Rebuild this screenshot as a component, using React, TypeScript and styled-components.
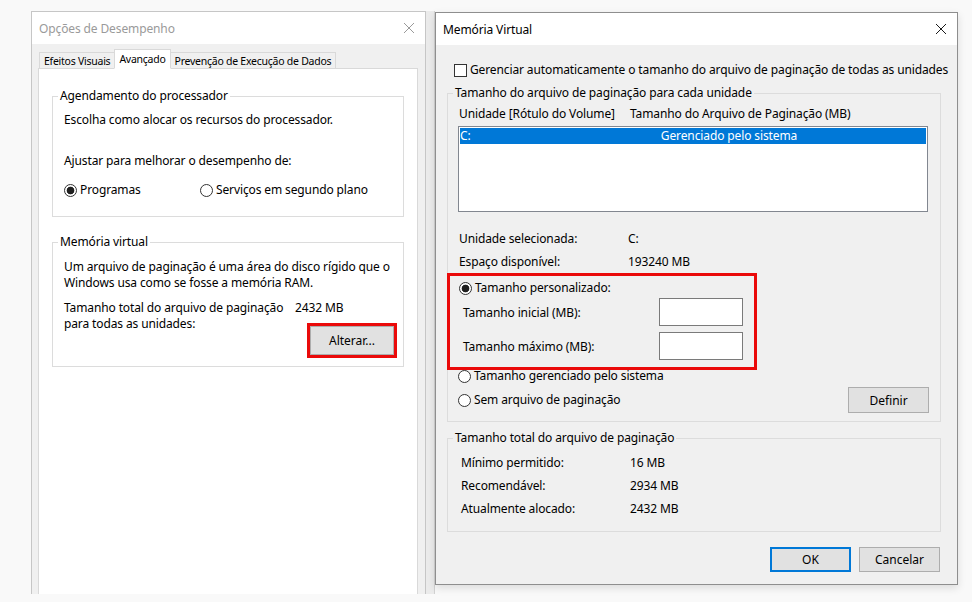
import React from 'react'
import styled, { createGlobalStyle } from 'styled-components'

const GlobalStyle = createGlobalStyle`
  * { box-sizing: border-box; }
  html, body { margin: 0; padding: 0; background: #f9f9f9; }
  body {
    font-family: "Noto Sans", "Open Sans", sans-serif;
    font-size: 12px;
    letter-spacing: -0.12px;
    color: #000;
  }
`

const CloseIcon = ({ color }: { color: string }) => (
  <svg width="12" height="12" viewBox="0 0 12 12">
    <path d="M1 1 L11 11 M11 1 L1 11" stroke={color} strokeWidth="1" fill="none" />
  </svg>
)

const Page = () => (
  <Screen>
    <PerfWindow>
      <TitleBar>
        <Title $inactive>Opções de Desempenho</Title>
        <CloseIcon color="#9a9a9a" />
      </TitleBar>
      <PerfBody>
        <TabStrip>
          <Tab>Efeitos Visuais</Tab>
          <Tab $active>Avançado</Tab>
          <Tab>Prevenção de Execução de Dados</Tab>
        </TabStrip>
        <TabPanel>
          <Group $pad={11} $padRight={11} $padBottom={18}>
            <Legend $pad={11}>Agendamento do processador</Legend>
            <Line $top={8}>Escolha como alocar os recursos do processador.</Line>
            <Line $top={25}>Ajustar para melhorar o desempenho de:</Line>
            <RadioPair>
              <Radio checked label="Programas" />
              <Radio label="Serviços em segundo plano" />
            </RadioPair>
          </Group>

          <Group $pad={11} $padRight={6} $padBottom={8} $top={17}>
            <Legend $pad={11}>Memória virtual</Legend>
            <Line $top={9}>Um arquivo de paginação é uma área do disco rígido que o</Line>
            <Line>Windows usa como se fosse a memória RAM.</Line>
            <TotalRow>
              <span>Tamanho total do arquivo de paginação</span>
              <span>2432 MB</span>
            </TotalRow>
            <ChangeRow>
              <span>para todas as unidades:</span>
              <Mark>
                <Button $w={84} $h={29}>Alterar...</Button>
              </Mark>
            </ChangeRow>
          </Group>
        </TabPanel>
      </PerfBody>
    </PerfWindow>

    <BehindStrip />

    <VmWindow>
      <TitleBar>
        <Title>Memória Virtual</Title>
        <CloseIcon color="#1a1a1a" />
      </TitleBar>
      <VmBody>
        <CheckRow>
          <CheckBox />
          <span>Gerenciar automaticamente o tamanho do arquivo de paginação de todas as unidades</span>
        </CheckRow>

        <Group $pad={10} $padRight={12} $padBottom={8} $top={7}>
          <Legend $pad={10}>Tamanho do arquivo de paginação para cada unidade</Legend>
          <ListHeader>
            <span>Unidade [Rótulo do Volume]</span>
            <span>Tamanho do Arquivo de Paginação (MB)</span>
          </ListHeader>
          <ListBox>
            <ListItem $selected>
              <span>C:</span>
              <ItemSize>Gerenciado pelo sistema</ItemSize>
            </ListItem>
          </ListBox>
          <InfoGrid $top={19} $indent={1}>
            <span>Unidade selecionada:</span>
            <span>C:</span>
            <span>Espaço disponível:</span>
            <span>193240 MB</span>
          </InfoGrid>

          <Highlight>
            <Radio checked label="Tamanho personalizado:" />
            <SizeRow $top={2}>
              <span>Tamanho inicial (MB):</span>
              <SizeInput />
            </SizeRow>
            <SizeRow $top={6}>
              <span>Tamanho máximo (MB):</span>
              <SizeInput />
            </SizeRow>
          </Highlight>

          <ManagedRow>
            <Radio label="Tamanho gerenciado pelo sistema" />
          </ManagedRow>
          <NoFileRow>
            <Radio label="Sem arquivo de paginação" />
            <Button $w={81} $h={26}>Definir</Button>
          </NoFileRow>
        </Group>

        <Group $pad={13} $padRight={12} $padBottom={14} $top={8}>
          <Legend $pad={13}>Tamanho total do arquivo de paginação</Legend>
          <InfoGrid $top={9} $indent={0}>
            <span>Mínimo permitido:</span>
            <span>16 MB</span>
            <span>Recomendável:</span>
            <span>2934 MB</span>
            <span>Atualmente alocado:</span>
            <span>2432 MB</span>
          </InfoGrid>
        </Group>

        <DialogButtons>
          <Button $w={81} $h={25} $default>OK</Button>
          <Button $w={81} $h={25}>Cancelar</Button>
        </DialogButtons>
      </VmBody>
    </VmWindow>
  </Screen>
)

const Radio = ({ checked, label }: { checked?: boolean; label: string }) => (
  <RadioLabel>
    <RadioDot $checked={checked} />
    <span>{label}</span>
  </RadioLabel>
)

const App = () => (
  <>
    <GlobalStyle />
    <Page />
  </>
)

const Screen = styled.div`
  width: 972px;
  height: 602px;
  overflow: hidden;
  display: flex;
  align-items: flex-start;
  padding-left: 31px;
`

const PerfWindow = styled.div`
  margin-top: 11px;
  width: 395px;
  height: 583px;
  border: 1px solid #c6c6c6;
  border-bottom: none;
  background: #f0f0f0;
  display: flex;
  flex-direction: column;
`

const BehindStrip = styled.div`
  margin-top: 11px;
  width: 9px;
  height: 583px;
  background: #ebebeb;
  border-right: 1px solid #d2d2d2;
`

const VmWindow = styled.div`
  margin-top: 12px;
  width: 523px;
  height: 573px;
  border: 1px solid #8e8e8e;
  background: #f0f0f0;
  box-shadow: 0 3px 8px rgba(0, 0, 0, 0.12);
  display: flex;
  flex-direction: column;
`

const TitleBar = styled.div`
  height: 32px;
  flex: none;
  background: #fff;
  display: flex;
  align-items: center;
  justify-content: space-between;
  padding: 0 10px 0 7px;
`

const Title = styled.span<{ $inactive?: boolean }>`
  color: ${(p) => (p.$inactive ? '#9a9a9a' : '#000')};
  font-size: 12px;
`

const PerfBody = styled.div`
  flex: 1;
  display: flex;
  flex-direction: column;
  padding: 5px 7px 0 6px;
`

const TabStrip = styled.div`
  display: flex;
  align-items: flex-end;
  height: 20px;
  padding-left: 1px;
  position: relative;
  z-index: 1;
  margin-bottom: -1px;
`

const Tab = styled.div<{ $active?: boolean }>`
  height: ${(p) => (p.$active ? 20 : 17)}px;
  line-height: ${(p) => (p.$active ? 18 : 16)}px;
  padding: 0 4px;
  margin: 0 ${(p) => (p.$active ? -1 : 0)}px;
  font-size: 10.5px;
  letter-spacing: -0.25px;
  border: 1px solid #d9d9d9;
  border-bottom: ${(p) => (p.$active ? '1px solid #fff' : '1px solid #d9d9d9')};
  background: ${(p) => (p.$active ? '#fff' : '#f0f0f0')};
  position: relative;
  z-index: ${(p) => (p.$active ? 2 : 1)};
  white-space: nowrap;
`

const TabPanel = styled.div`
  flex: 1;
  background: #fff;
  border: 1px solid #d9d9d9;
  border-bottom: none;
  padding: 19px 13px 0 13px;
`

const Group = styled.fieldset<{ $pad: number; $padRight: number; $padBottom: number; $top?: number }>`
  margin: ${(p) => p.$top ?? 0}px 0 0 0;
  min-width: 0;
  border: 1px solid #dcdcdc;
  padding: 0 ${(p) => p.$padRight}px ${(p) => p.$padBottom}px ${(p) => p.$pad}px;
`

const Legend = styled.legend<{ $pad: number }>`
  padding: 0 2px;
  margin-left: ${(p) => -(p.$pad - 5)}px;
  line-height: 16px;
`

const Line = styled.div<{ $top?: number }>`
  margin-top: ${(p) => p.$top ?? 0}px;
  line-height: 16px;
  white-space: nowrap;
`

const RadioPair = styled.div`
  margin-top: 13px;
  display: grid;
  grid-template-columns: 136px auto;
  line-height: 16px;
`

const RadioLabel = styled.label`
  display: flex;
  align-items: center;
  gap: 3px;
  line-height: 16px;
  white-space: nowrap;
`

const RadioDot = styled.span<{ $checked?: boolean }>`
  width: 13px;
  height: 13px;
  flex: none;
  border-radius: 50%;
  border: 1px solid #333;
  background: ${(p) =>
    p.$checked ? 'radial-gradient(circle, #1f1f1f 0 3.5px, #fff 4.2px)' : '#fff'};
`

const TotalRow = styled.div`
  margin-top: 9px;
  display: grid;
  grid-template-columns: 231px auto;
  line-height: 16px;
  white-space: nowrap;
`

const ChangeRow = styled.div`
  display: flex;
  justify-content: space-between;
  align-items: flex-start;
  line-height: 16px;
  white-space: nowrap;
`

const Mark = styled.span`
  margin-top: 7px;
  display: inline-flex;
  border: 3px solid #ea0a0a;
`

const Button = styled.button<{ $w: number; $h: number; $default?: boolean }>`
  width: ${(p) => p.$w}px;
  height: ${(p) => p.$h}px;
  padding: 0;
  font: inherit;
  font-size: 12px;
  color: #000;
  background: #e1e1e1;
  border: 1px solid ${(p) => (p.$default ? '#0078d7' : '#adadad')};
  box-shadow: ${(p) => (p.$default ? 'inset 0 0 0 1px #0078d7' : 'none')};
`

const VmBody = styled.div`
  flex: 1;
  display: flex;
  flex-direction: column;
  padding: 17px 16px 0 11px;
`

const CheckRow = styled.div`
  display: flex;
  align-items: center;
  gap: 3px;
  padding-left: 7px;
  line-height: 16px;
  white-space: nowrap;
`

const CheckBox = styled.span`
  width: 13px;
  height: 13px;
  flex: none;
  border: 1px solid #333;
  background: #fff;
`

const ListHeader = styled.div`
  margin-top: 5px;
  padding-left: 1px;
  display: grid;
  grid-template-columns: 171px auto;
  line-height: 16px;
  white-space: nowrap;
`

const ListBox = styled.div`
  margin-top: 4px;
  height: 86px;
  border: 1px solid #828790;
  background: #fff;
  padding: 1px;
`

const ListItem = styled.div<{ $selected?: boolean }>`
  height: 16px;
  line-height: 16px;
  display: grid;
  grid-template-columns: 170px 198px;
  background: ${(p) => (p.$selected ? '#0078d7' : 'transparent')};
  color: ${(p) => (p.$selected ? '#fff' : '#000')};
  white-space: nowrap;
`

const ItemSize = styled.span`
  text-align: center;
`

const InfoGrid = styled.div<{ $top: number; $indent: number }>`
  margin-top: ${(p) => p.$top}px;
  padding-left: ${(p) => p.$indent}px;
  display: grid;
  grid-template-columns: 169px auto;
  row-gap: 7px;
  line-height: 16px;
  white-space: nowrap;
`

const Highlight = styled.div`
  position: relative;
  z-index: 1;
  margin: 3px 0 0 -11px;
  width: 310px;
  border: 3px solid #ea0a0a;
  padding: 4px 11px 7px 9px;
`

const SizeRow = styled.div<{ $top: number }>`
  margin-top: ${(p) => p.$top}px;
  padding-left: 4px;
  display: grid;
  grid-template-columns: 196px 84px;
  align-items: center;
  white-space: nowrap;
`

const SizeInput = styled.span`
  height: 28px;
  border: 1px solid #7a7a7a;
  background: #fff;
`

const ManagedRow = styled.div`
  margin-top: -2px;
`

const NoFileRow = styled.div`
  margin-top: 3px;
  margin-right: -1px;
  display: flex;
  justify-content: space-between;
  align-items: center;
`

const DialogButtons = styled.div`
  margin-top: 15px;
  padding-right: 1px;
  display: flex;
  justify-content: flex-end;
  gap: 8px;
`

export default App
